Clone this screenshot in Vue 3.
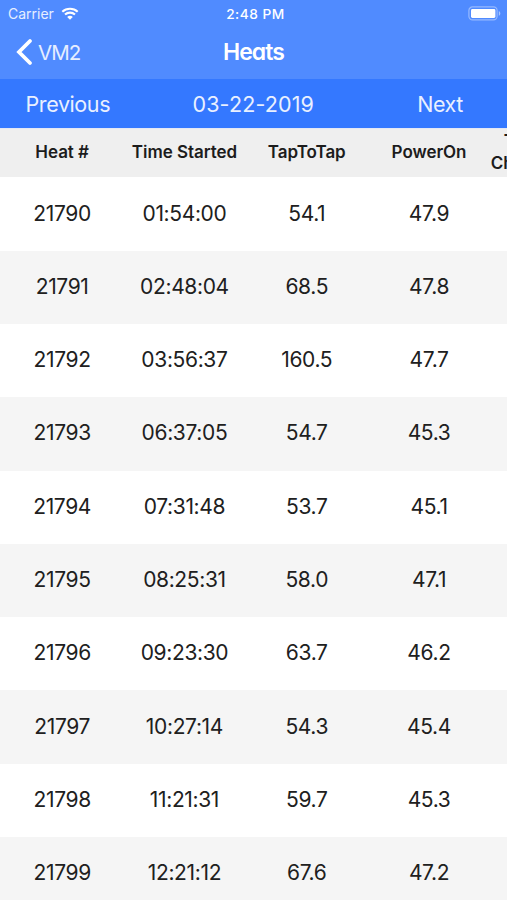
<script setup>
const columns = ['Heat #', 'Time Started', 'TapToTap', 'PowerOn']
const heats = [
  ['21790', '01:54:00', '54.1', '47.9'],
  ['21791', '02:48:04', '68.5', '47.8'],
  ['21792', '03:56:37', '160.5', '47.7'],
  ['21793', '06:37:05', '54.7', '45.3'],
  ['21794', '07:31:48', '53.7', '45.1'],
  ['21795', '08:25:31', '58.0', '47.1'],
  ['21796', '09:23:30', '63.7', '46.2'],
  ['21797', '10:27:14', '54.3', '45.4'],
  ['21798', '11:21:31', '59.7', '45.3'],
  ['21799', '12:21:12', '67.6', '47.2'],
]
</script>

<template>
  <main class="screen">
    <header class="top">
      <div class="status">
        <div class="carrier">
          <span>Carrier</span>
          <svg class="wifi" viewBox="0 0 18 13" width="18" height="13">
            <path d="M1.3 4.7C5.6.7 12.4.7 16.7 4.7M4 7.6c2.8-2.6 7.2-2.6 10 0" fill="none" stroke="#fff" stroke-width="2.1" />
            <path d="M6.2 9.9c1.6-1.5 4-1.5 5.6 0L9 12.7z" fill="#fff" />
          </svg>
        </div>
        <span class="clock">2:48 PM</span>
        <svg class="battery" viewBox="0 0 33 15" width="33" height="15">
          <rect x=".9" y=".9" width="28.2" height="13" rx="3.6" fill="none" stroke="#fff" stroke-opacity=".4" stroke-width="1.2" />
          <rect x="3" y="3" width="24.4" height="9" rx="1.4" fill="#fff" />
          <path d="M30.8 5v4.8c2-.7 2-4.1 0-4.8" fill="#fff" fill-opacity=".5" />
        </svg>
      </div>
      <nav class="nav">
        <a class="back">
          <svg viewBox="0 0 17 28" width="17" height="28">
            <path d="M14 3 3 14l11 11" fill="none" stroke="#fff" stroke-width="3.8" stroke-linecap="round" />
          </svg>
          <span>VM2</span>
        </a>
        <h1>Heats</h1>
        <span></span>
      </nav>
    </header>
    <div class="dates">
      <span>Previous</span>
      <span class="date">03-22-2019</span>
      <span>Next</span>
    </div>
    <section class="table">
      <div class="row head">
        <span v-for="c in columns" :key="c">{{ c }}</span>
        <span class="two-line"><span class="first">Tap To</span><br />ChargeStart</span>
      </div>
      <div v-for="h in heats" :key="h[0]" class="row">
        <span v-for="(v, i) in h" :key="i">{{ v }}</span>
        <span></span>
      </div>
    </section>
  </main>
</template>

<style>
body {
  margin: 0;
}
</style>

<style scoped>
.screen {
  width: 507px;
  height: 900px;
  overflow: hidden;
  background: #fff;
  color: #202020;
  font-family: Inter, "Liberation Sans", sans-serif;
}
.top {
  height: 79px;
  background: #508bff;
  color: #fff;
}
.status {
  height: 27px;
  display: grid;
  grid-template-columns: 1fr auto 1fr;
  align-items: center;
  padding: 0 6px 0 8px;
  font-size: 14px;
}
.carrier {
  display: flex;
  align-items: center;
  gap: 7px;
  color: #e6eeff;
}
.clock {
  margin-left: 2px;
  font-size: 13.7px;
  font-weight: 500;
  letter-spacing: 0.5px;
}
.battery {
  justify-self: end;
}
.nav {
  height: 52px;
  display: grid;
  grid-template-columns: 1fr auto 1fr;
  align-items: center;
  padding: 0 16px 2px;
  box-sizing: border-box;
}
.back {
  display: flex;
  align-items: center;
  gap: 5px;
  font-size: 20.5px;
  letter-spacing: -0.9px;
  color: #e6eeff;
}
h1 {
  margin: 0;
  font-size: 23px;
  font-weight: 600;
  letter-spacing: -0.9px;
  font-feature-settings: "cv11";
}
.dates {
  height: 49px;
  display: grid;
  grid-template-columns: 1fr auto 1fr;
  align-items: center;
  padding: 0 44px 0 25.5px;
  box-sizing: border-box;
  background: #3478ff;
  color: #e9f0ff;
  font-size: 21.5px;
  letter-spacing: -0.4px;
}
.dates .date {
  margin-left: 18px;
  font-size: 21.5px;
  letter-spacing: 0.15px;
}
.dates span:last-child {
  justify-self: end;
}
.row {
  display: grid;
  grid-template-columns: repeat(5, 122.3px);
  width: 613px;
  height: 73.3px;
  padding: 0 0 2px 1px;
  box-sizing: border-box;
  align-items: center;
  text-align: center;
  font-size: 21px;
  letter-spacing: -0.35px;
}
.row:nth-child(odd) {
  background: #f5f5f5;
}
.row.head {
  height: 49.4px;
  padding-bottom: 2px;
  background: #efefef;
  border-top: 1px solid #e3e8f5;
  font-size: 17px;
  font-weight: 600;
  letter-spacing: -0.05px;
  color: #1c1c1c;
}
.head span {
  white-space: nowrap;
}
.two-line {
  line-height: 22px;
  text-align: left;
  padding-left: 0.5px;
}
.first {
  padding-left: 13px;
}
</style>
